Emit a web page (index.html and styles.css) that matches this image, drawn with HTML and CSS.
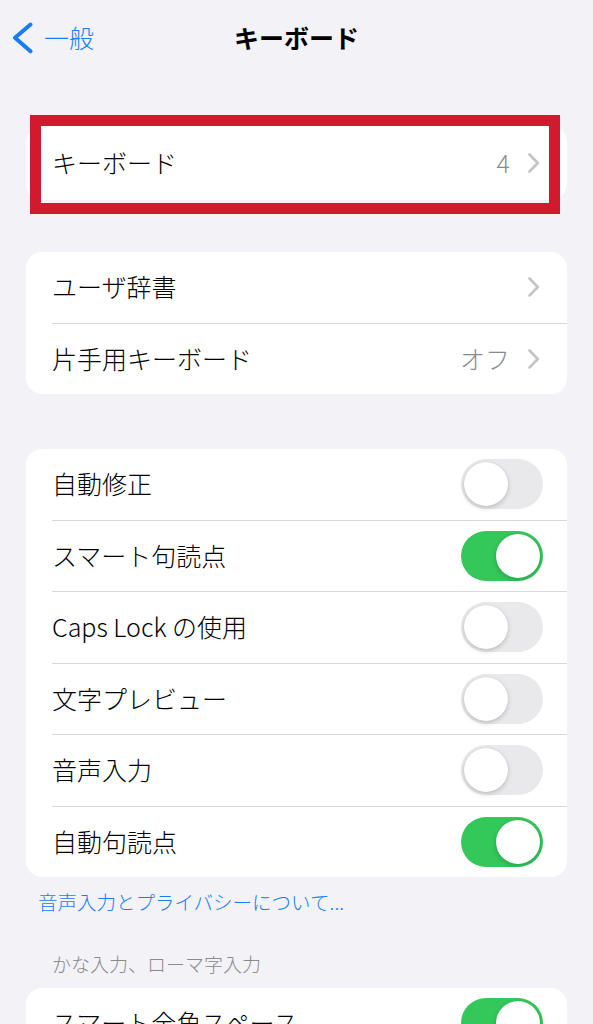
FILE: index.html
```html
<!DOCTYPE html>
<html lang="ja">
<head>
    <meta charset="UTF-8">
    <meta name="viewport" content="width=device-width, initial-scale=1.0">
    <title>キーボード</title>
    <link rel="stylesheet" href="styles.css">
</head>
<body>
    <div class="nav">
        <div class="nav-back">
            <svg class="back-icon" width="22" height="32" viewBox="0 0 22 32">
                <polyline points="18.5,2.5 3,15.8 18.5,29.3" fill="none" stroke="#1a7cf5" stroke-width="4" stroke-linecap="round" stroke-linejoin="round"/>
            </svg>
            <span>一般</span>
        </div>
        <div class="nav-title">キーボード</div>
        <div></div>
    </div>

    <div class="group group-first">
        <div class="row">
            <div class="row-body tall">
                <span class="label">キーボード</span>
                <span class="value">4</span>
                <svg class="chevron" width="12" height="20" viewBox="0 0 12 20">
                    <polyline points="1.5,1.5 9.8,10 1.5,18.5" fill="none" stroke="#c4c4c7" stroke-width="2.6" stroke-linecap="round" stroke-linejoin="round"/>
                </svg>
            </div>
        </div>
        <div class="mark"></div>
    </div>

    <div class="group group-second">
        <div class="row">
            <div class="row-body">
                <span class="label">ユーザ辞書</span>
                <svg class="chevron" width="12" height="20" viewBox="0 0 12 20">
                    <polyline points="1.5,1.5 9.8,10 1.5,18.5" fill="none" stroke="#c4c4c7" stroke-width="2.6" stroke-linecap="round" stroke-linejoin="round"/>
                </svg>
            </div>
        </div>
        <div class="row">
            <div class="row-body">
                <span class="label">片手用キーボード</span>
                <span class="value">オフ</span>
                <svg class="chevron" width="12" height="20" viewBox="0 0 12 20">
                    <polyline points="1.5,1.5 9.8,10 1.5,18.5" fill="none" stroke="#c4c4c7" stroke-width="2.6" stroke-linecap="round" stroke-linejoin="round"/>
                </svg>
            </div>
        </div>
    </div>

    <div class="group group-third">
        <div class="row"><div class="row-body"><span class="label">自動修正</span><span class="switch"></span></div></div>
        <div class="row"><div class="row-body"><span class="label">スマート句読点</span><span class="switch on"></span></div></div>
        <div class="row"><div class="row-body"><span class="label">Caps Lock の使用</span><span class="switch"></span></div></div>
        <div class="row"><div class="row-body"><span class="label">文字プレビュー</span><span class="switch"></span></div></div>
        <div class="row"><div class="row-body"><span class="label">音声入力</span><span class="switch"></span></div></div>
        <div class="row"><div class="row-body"><span class="label">自動句読点</span><span class="switch on"></span></div></div>
    </div>
    <div class="group-footer">音声入力とプライバシーについて...</div>

    <div class="group-header">かな入力、ローマ字入力</div>
    <div class="group">
        <div class="row"><div class="row-body"><span class="label">スマート全角スペース</span><span class="switch on"></span></div></div>
    </div>
</body>
</html>
```

FILE: styles.css
```css
body {
    margin: 0;
    background-color: #f2f2f7;
    font-family: "Noto Sans CJK JP", "Noto Sans", sans-serif;
    color: #000;
    overflow: hidden;
}

.nav {
    height: 74px;
    display: grid;
    grid-template-columns: 1fr auto 1fr;
    align-items: center;
}

.nav-back {
    display: flex;
    align-items: center;
    gap: 10px;
    padding-left: 12px;
    color: #1a7cf5;
    font-size: 25px;
    font-weight: 300;
}

.back-icon {
    margin-top: 1px;
}

.nav-title {
    font-size: 25px;
    font-weight: 700;
}

.group {
    position: relative;
    margin: 0 26px;
    background-color: #fff;
    border-radius: 16px;
}

.group-first {
    margin-top: 52px;
}

.group-second {
    margin-top: 52px;
}

.group-third {
    margin-top: 55px;
}

.row {
    padding-left: 26px;
}

.row-body {
    height: 70.5px;
    display: flex;
    align-items: center;
    padding-right: 24px;
    border-top: 1px solid #d8d8dc;
}

.row:first-child .row-body {
    border-top: none;
}

.row-body.tall {
    height: 74px;
}

.label {
    flex: 1;
    font-size: 25px;
    font-weight: 300;
    white-space: nowrap;
    margin-top: -2px;
}

.value {
    font-size: 25px;
    font-weight: 300;
    color: #8a8a8e;
    margin-right: 18px;
    margin-top: -2px;
}

.chevron {
    margin-right: 3px;
}

.switch {
    position: relative;
    width: 82px;
    height: 50px;
    border-radius: 25px;
    background-color: #e9e9eb;
    flex-shrink: 0;
}

.switch::after {
    content: "";
    position: absolute;
    top: 3px;
    left: 3px;
    width: 44px;
    height: 44px;
    border-radius: 50%;
    background-color: #fff;
    box-shadow: 0 2px 5px rgba(0, 0, 0, 0.18), 0 0 1px rgba(0, 0, 0, 0.15);
}

.switch.on {
    background-color: #34c759;
}

.switch.on::after {
    left: 35px;
}

.mark {
    position: absolute;
    left: 4px;
    top: -11px;
    width: 530px;
    height: 99px;
    box-sizing: border-box;
    border: 11px solid #d21a2e;
}

.group-footer {
    padding: 13px 0 0 38px;
    font-size: 19.5px;
    font-weight: 300;
    line-height: 24px;
    color: #1a7cf5;
}

.group-header {
    padding: 38px 0 0 52px;
    height: 36px;
    font-size: 19px;
    font-weight: 300;
    line-height: 24px;
    color: #8a8a8e;
}
```
